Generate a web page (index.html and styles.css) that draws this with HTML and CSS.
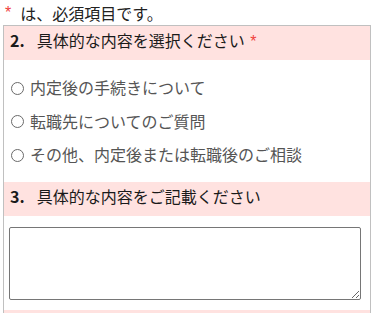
FILE: index.html
```html
<!DOCTYPE html>
<html lang="ja">
<head>
<meta charset="utf-8">
<link rel="stylesheet" href="styles.css">
</head>
<body>
<p class="note"><span class="req">*</span><span class="note-text">は、必須項目です。</span></p>
<div class="form">
  <div class="q-head"><span class="num">2.</span>具体的な内容を選択ください <span class="req">*</span></div>
  <div class="options">
    <label class="opt"><span class="radio"></span>内定後の手続きについて</label>
    <label class="opt"><span class="radio"></span>転職先についてのご質問</label>
    <label class="opt"><span class="radio"></span>その他、内定後または転職後のご相談</label>
  </div>
  <div class="q-head"><span class="num">3.</span>具体的な内容をご記載ください</div>
  <div class="field">
    <textarea class="area"></textarea>
  </div>
  <div class="q-head q-next"></div>
</div>
</body>
</html>
```
FILE: styles.css
```css
html, body {
  margin: 0;
  padding: 0;
  background: #fff;
}
body {
  padding: 1px 3px 0 3px;
  font-family: "Noto Sans CJK JP", "Noto Sans", sans-serif;
  font-size: 16px;
  color: #222;
}
.note {
  margin: 0;
  height: 24px;
  line-height: 24px;
  padding-left: 2px;
  display: flex;
  align-items: flex-start;
}
.req {
  color: #f0413c;
  font-family: "Liberation Sans", sans-serif;
}
.note .req {
  margin-right: 9px;
}
.form {
  border: 1px solid #c0c0c0;
  border-bottom: none;
}
.q-head {
  background: #ffe2e0;
  height: 34px;
  box-sizing: border-box;
  line-height: 26px;
  padding: 1px 0 7px 6px;
  color: #1a1a1a;
  white-space: nowrap;
}
.q-head .req {
  margin-left: 2px;
}
.num {
  font-weight: bold;
  margin-right: 12px;
}
.options {
  padding: 11px 0 10.5px 0;
  display: flex;
  flex-direction: column;
}
.opt {
  height: 33.5px;
  line-height: 33.5px;
  color: #555;
  display: flex;
  align-items: center;
  padding-left: 7px;
}
.radio {
  width: 11px;
  height: 11px;
  border: 1px solid #6a6a6a;
  border-radius: 50%;
  margin-right: 6px;
  box-sizing: border-box;
  width: 13px;
  height: 13px;
  margin-top: 1px;
}
.field {
  padding: 11px 0 10px 5px;
}
.area {
  display: block;
  width: 352px;
  height: 73px;
  box-sizing: border-box;
  margin: 0;
  border: 1px solid #767676;
  border-radius: 2px;
}
.q-next {
  height: 10px;
  padding: 0;
}
```
